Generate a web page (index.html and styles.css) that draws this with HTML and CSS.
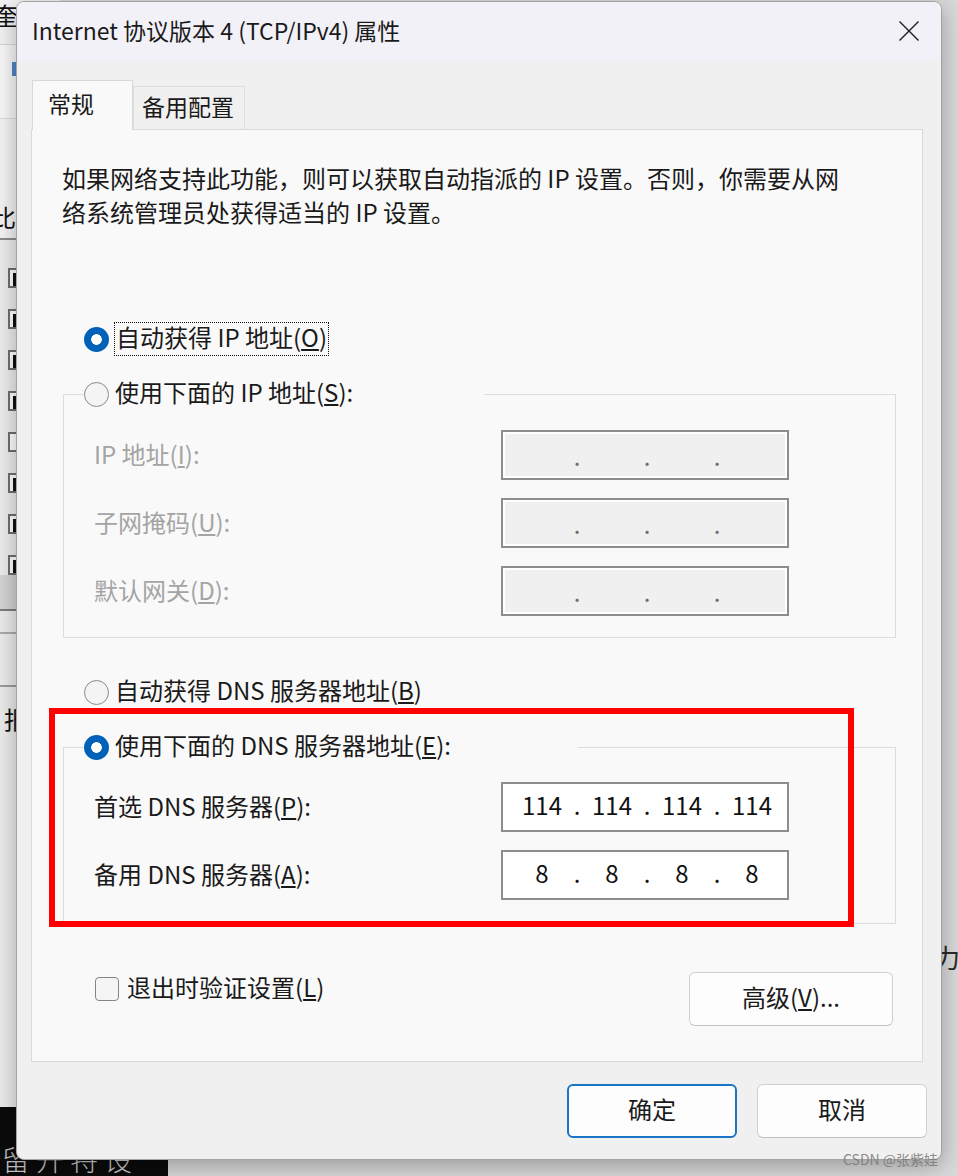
FILE: index.html
```html
<!DOCTYPE html>
<html lang="zh-CN">
<head>
  <meta charset="UTF-8">
  <title>Internet 协议版本 4 (TCP/IPv4) 属性</title>
  <link rel="stylesheet" href="styles.css">
</head>
<body>
  <div class="desktop">

    <!-- window behind the dialog -->
    <div class="behind-win">
      <div class="bw-head">奎</div>
      <div class="bw-tool"><span class="bw-icon"></span></div>
      <div class="bw-label">比</div>
      <div class="bw-list">
        <div class="bw-item"><span class="bw-box on"></span></div>
        <div class="bw-item"><span class="bw-box on"></span></div>
        <div class="bw-item"><span class="bw-box on"></span></div>
        <div class="bw-item"><span class="bw-box on"></span></div>
        <div class="bw-item"><span class="bw-box"></span></div>
        <div class="bw-item"><span class="bw-box on"></span></div>
        <div class="bw-item"><span class="bw-box on"></span></div>
        <div class="bw-item"><span class="bw-box on"></span></div>
      </div>
      <div class="bw-band"></div>
      <div class="bw-row"></div>
      <div class="bw-row tall"></div>
      <div class="bw-label small">报</div>
    </div>
    <div class="behind-char">力</div>
    <div class="behind-term">留开特设</div>

    <div class="dialog">
      <div class="titlebar">
        <span class="title">Internet 协议版本 4 (TCP/IPv4) 属性</span>
        <svg class="close" width="20" height="20" viewBox="0 0 20 20">
          <path d="M0.5 0.5L19.5 19.5M19.5 0.5L0.5 19.5" stroke="#1c1c1c" stroke-width="1.4" fill="none"/>
        </svg>
      </div>

      <div class="dialog-body">
        <div class="tabs">
          <div class="tab active">常规</div>
          <div class="tab">备用配置</div>
        </div>

        <div class="tab-panel">
          <p class="intro">如果网络支持此功能，则可以获取自动指派的 IP 设置。否则，你需要从网<br>络系统管理员处获得适当的 IP 设置。</p>

          <div class="radio-row ip-auto">
            <span class="radio checked"></span>
            <span class="focus">自动获得 IP 地址(<u>O</u>)</span>
          </div>

          <fieldset class="group ip-group">
            <legend>
              <span class="radio-row">
                <span class="radio"></span>
                <span class="label">使用下面的 IP 地址(<u>S</u>):</span>
              </span>
            </legend>
            <div class="field-row disabled">
              <span class="label">IP 地址(<u>I</u>):</span>
              <div class="ipbox">
                <span class="octet"></span><span class="dot">.</span><span class="octet"></span><span class="dot">.</span><span class="octet"></span><span class="dot">.</span><span class="octet"></span>
              </div>
            </div>
            <div class="field-row disabled">
              <span class="label">子网掩码(<u>U</u>):</span>
              <div class="ipbox">
                <span class="octet"></span><span class="dot">.</span><span class="octet"></span><span class="dot">.</span><span class="octet"></span><span class="dot">.</span><span class="octet"></span>
              </div>
            </div>
            <div class="field-row disabled">
              <span class="label">默认网关(<u>D</u>):</span>
              <div class="ipbox">
                <span class="octet"></span><span class="dot">.</span><span class="octet"></span><span class="dot">.</span><span class="octet"></span><span class="dot">.</span><span class="octet"></span>
              </div>
            </div>
          </fieldset>

          <div class="radio-row dns-auto">
            <span class="radio"></span>
            <span class="label">自动获得 DNS 服务器地址(<u>B</u>)</span>
          </div>

          <fieldset class="group dns-group">
            <legend>
              <span class="radio-row">
                <span class="radio checked"></span>
                <span class="label">使用下面的 DNS 服务器地址(<u>E</u>):</span>
              </span>
            </legend>
            <div class="field-row">
              <span class="label">首选 DNS 服务器(<u>P</u>):</span>
              <div class="ipbox">
                <span class="octet">114</span><span class="dot">.</span><span class="octet">114</span><span class="dot">.</span><span class="octet">114</span><span class="dot">.</span><span class="octet">114</span>
              </div>
            </div>
            <div class="field-row">
              <span class="label">备用 DNS 服务器(<u>A</u>):</span>
              <div class="ipbox">
                <span class="octet">8</span><span class="dot">.</span><span class="octet">8</span><span class="dot">.</span><span class="octet">8</span><span class="dot">.</span><span class="octet">8</span>
              </div>
            </div>
          </fieldset>

          <div class="panel-footer">
            <div class="check-row">
              <span class="checkbox"></span>
              <span class="label">退出时验证设置(<u>L</u>)</span>
            </div>
            <button class="btn advanced">高级(<u>V</u>)...</button>
          </div>
        </div>

        <div class="dialog-buttons">
          <button class="btn default">确定</button>
          <button class="btn">取消</button>
        </div>
      </div>
    </div>

    <div class="annotation"></div>
    <div class="watermark">CSDN @张紫娃</div>
  </div>
</body>
</html>
```

FILE: styles.css
```css
* {
  box-sizing: border-box;
}

body {
  margin: 0;
  font-family: "Noto Sans CJK SC", "Noto Sans", sans-serif;
  color: #1a1a1a;
}

.desktop {
  position: relative;
  width: 958px;
  height: 1176px;
  overflow: hidden;
  background: #d9d9d9;
}

/* ---------- stuff behind the dialog ---------- */

.behind-win {
  position: absolute;
  left: 0;
  top: 0;
  width: 60px;
  height: 1108px;
  background: #ebebeb;
}

.bw-head {
  height: 45px;
  border-bottom: 1px solid #d6d6d6;
  background: #f2f2f2;
  font-size: 24px;
  line-height: 30px;
  margin-left: -6px;
  color: #111;
}

.bw-tool {
  height: 74px;
  border-bottom: 1px solid #dcdcdc;
  background: #f7f7f7;
  padding: 17px 0 0 12px;
}

.bw-icon {
  display: block;
  width: 8px;
  height: 14px;
  background: #4f86c6;
}

.bw-label {
  height: 121px;
  border-bottom: 2px solid #8c8c8c;
  background: #f3f3f3;
  font-size: 24px;
  padding-top: 80px;
  margin-left: -8px;
  color: #111;
}

.bw-list {
  padding-top: 7px;
  background: #ececec;
}

.bw-item {
  height: 41px;
  padding: 21px 0 0 8px;
}

.bw-box {
  display: block;
  width: 20px;
  height: 20px;
  border: 2px solid #6f6f6f;
  background: #fff;
}

.bw-box.on {
  box-shadow: inset 3px 3px 0 #fff, inset 8px 8px 0 #111;
}

.bw-band {
  height: 36px;
  background: #d3d3d3;
  border-bottom: 2px solid #7d7d7d;
}

.bw-row {
  height: 23px;
  border-bottom: 2px solid #ababab;
}

.bw-row.tall {
  height: 53px;
  border-bottom-color: #9c9c9c;
}

.bw-label.small {
  height: 60px;
  border: 0;
  padding-top: 14px;
  background: transparent;
  margin-left: 4px;
}

.behind-char {
  position: absolute;
  left: 934px;
  top: 938px;
  font-size: 26px;
  color: #2a2a2a;
}

.behind-term {
  position: absolute;
  left: 0;
  top: 1107px;
  width: 168px;
  height: 69px;
  padding: 32px 0 0 2px;
  background: #0b0b0b;
  color: #c4c4c4;
  font-size: 28px;
  font-weight: 300;
  line-height: 40px;
  letter-spacing: 6px;
  white-space: nowrap;
  overflow: hidden;
}

/* ---------- dialog ---------- */

.dialog {
  position: absolute;
  left: 16px;
  top: 1px;
  width: 926px;
  height: 1159px;
  border: 1px solid #a3a3a3;
  border-radius: 8px;
  background: #f0f0f0;
  overflow: hidden;
  box-shadow: 0 6px 22px rgba(0, 0, 0, 0.3);
}

.titlebar {
  height: 60px;
  display: flex;
  align-items: center;
  justify-content: space-between;
  padding: 0 22px 4px 15px;
  background: #f3f1f8;
}

.title {
  font-size: 23px;
  color: #1a1a1a;
}

.close {
  margin-top: 2px;
}

.dialog-body {
  padding: 18px 18px 0 14px;
}

.tabs {
  display: flex;
  align-items: flex-end;
  margin-left: 1px;
  position: relative;
  z-index: 1;
  font-size: 23px;
}

.tab {
  height: 43px;
  width: 112px;
  padding: 0 0 4px 8px;
  display: flex;
  align-items: center;
  border: 1px solid #dedede;
  border-bottom: 0;
  background: #f0f0f0;
}

.tab.active {
  height: 50px;
  width: 101px;
  padding: 0 0 6px 15px;
  margin-bottom: -1px;
  border-color: #d9d9d9;
  background: #f9f9f9;
}

.tab-panel {
  border: 1px solid #dadada;
  background: #f9f9f9;
  font-size: 24px;
  padding-bottom: 35px;
}

.intro {
  margin: 31px 0 0 30px;
  line-height: 34px;
}

/* radio + checkbox */

.radio-row {
  display: flex;
  align-items: center;
  gap: 6px;
  height: 34px;
  line-height: 30px;
  white-space: nowrap;
}

.label {
  padding-bottom: 4px;
}

.radio {
  flex: none;
  width: 25px;
  height: 25px;
  border-radius: 50%;
  border: 1.5px solid #8a8a8a;
  background: #f4f4f4;
}

.radio.checked {
  border: 0;
  background: radial-gradient(circle, #fff 0 5px, #0061b8 5.6px);
}

.focus {
  border: 1px dotted #111;
  line-height: 28px;
  padding: 0 1px 4px;
  margin-left: -1px;
}

.ip-auto {
  margin: 93px 0 0 52px;
}

.dns-auto {
  margin: 37px 0 0 52px;
}

/* group boxes */

.group {
  margin: 21px 26px 0 31px;
  padding: 0 0 21px 20px;
  border: 1px solid #dcdcdc;
  min-inline-size: 0;
}

.group legend {
  padding: 0;
  height: 34px;
}

.ip-group legend {
  width: 400px;
}

.dns-group {
  padding-bottom: 23px;
}

.dns-group legend {
  width: 494px;
}

.field-row {
  display: grid;
  grid-template-columns: 407px 288px;
  align-items: center;
  padding-left: 10px;
  margin-top: 18px;
}

.group legend + .field-row {
  margin-top: 19px;
}

.dns-group legend + .field-row {
  margin-top: 18px;
}

.field-row.disabled {
  color: #a4a4a4;
}

.ipbox {
  display: flex;
  height: 50px;
  padding: 0 7px 5px 11px;
  align-items: center;
  border: 2px solid #8d8d8d;
  background: #fff;
  color: #111;
  font-size: 24px;
}

.disabled .ipbox {
  background: #f0f0f0;
  box-shadow: inset 0 0 0 2px #fff;
  color: #6e6e6e;
  padding-bottom: 0;
}

.octet {
  width: 56px;
  text-align: center;
}

.dot {
  width: 14px;
  text-align: center;
}

/* footer inside the panel */

.panel-footer {
  display: flex;
  justify-content: space-between;
  align-items: flex-start;
  margin: 48px 29px 0 63px;
}

.check-row {
  display: flex;
  align-items: center;
  gap: 8px;
  height: 34px;
  line-height: 30px;
}

.checkbox {
  width: 24px;
  height: 24px;
  border: 1.5px solid #858585;
  border-radius: 4px;
  background: #f5f5f5;
}

.btn {
  font-family: inherit;
  font-size: 24px;
  color: #1a1a1a;
  height: 54px;
  padding: 0 0 5px;
  border: 1px solid #d0d0d0;
  border-bottom-color: #c2c2c2;
  border-radius: 6px;
  background: #fdfdfd;
  cursor: pointer;
}

.advanced {
  width: 204px;
}

.dialog-buttons {
  display: flex;
  justify-content: flex-end;
  gap: 20px;
  margin: 22px -4px 0 0;
}

.dialog-buttons .btn {
  width: 170px;
}

.btn.default {
  border: 2px solid #1975c5;
}

/* red mark drawn over the screenshot */

.annotation {
  position: absolute;
  left: 49px;
  top: 708px;
  width: 805px;
  height: 219px;
  border: 6px solid #ff0000;
}

.watermark {
  position: absolute;
  left: 843px;
  top: 1149px;
  font-size: 14px;
  color: rgba(120, 120, 120, 0.85);
  white-space: nowrap;
}
```
